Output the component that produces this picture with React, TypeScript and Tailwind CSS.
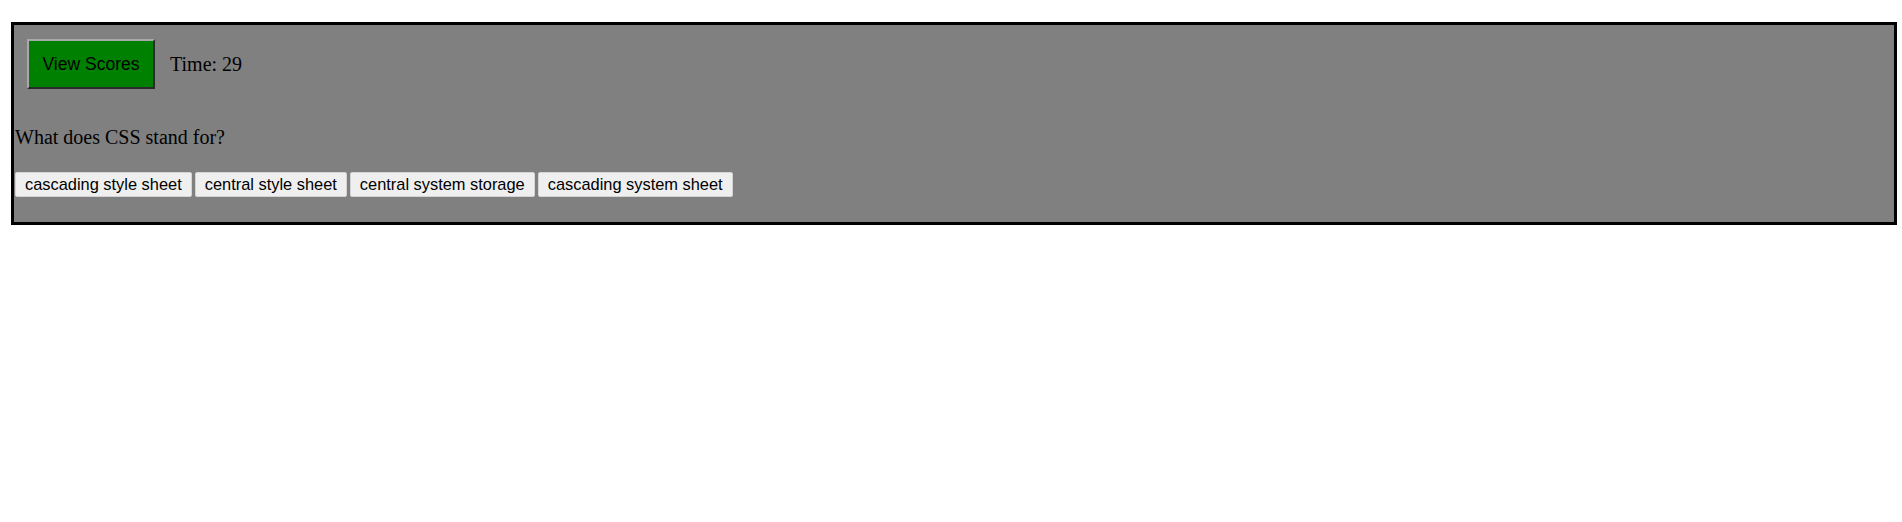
import React from 'react';

const options = [
    "cascading style sheet",
    "central style sheet",
    "central system storage",
    "cascading system sheet",
];

const App: React.FC = () => {
    return (
        <div className="min-h-[522px] bg-white pt-[22px] pl-[11px] pr-[5px]">
            <div className="border-[3px] border-black bg-[#808080] pl-px pt-[14px] pb-[25px]">
                <div className="flex items-center pl-[12px]">
                    <button
                        className="h-[50px] w-[128px] border-2 border-t-[#a8a8a8] border-l-[#a8a8a8] border-b-[#2a2a2a] border-r-[#2a2a2a] bg-[#008000] text-[17.5px] text-black"
                        style={{ fontFamily: '"Liberation Sans", Arial, sans-serif' }}
                    >
                        View Scores
                    </button>
                    <span
                        className="ml-[15px] text-[20px] text-black"
                        style={{ fontFamily: '"Liberation Serif", "Times New Roman", serif' }}
                    >
                        Time: 29
                    </span>
                </div>
                <p
                    className="mt-[37px] text-[20px] leading-[23px] text-black"
                    style={{ fontFamily: '"Liberation Serif", "Times New Roman", serif' }}
                >
                    What does CSS stand for?
                </p>
                <div className="mt-[23px] flex gap-[3px]">
                    {options.map((opt) => (
                        <button
                            key={opt}
                            className="h-[25px] rounded-[2px] border border-[#d4d4d4] bg-[#efefef] px-[9px] text-[16.4px] leading-none text-black"
                            style={{ fontFamily: '"Liberation Sans", Arial, sans-serif' }}
                        >
                            {opt}
                        </button>
                    ))}
                </div>
            </div>
        </div>
    );
};

export default App;
